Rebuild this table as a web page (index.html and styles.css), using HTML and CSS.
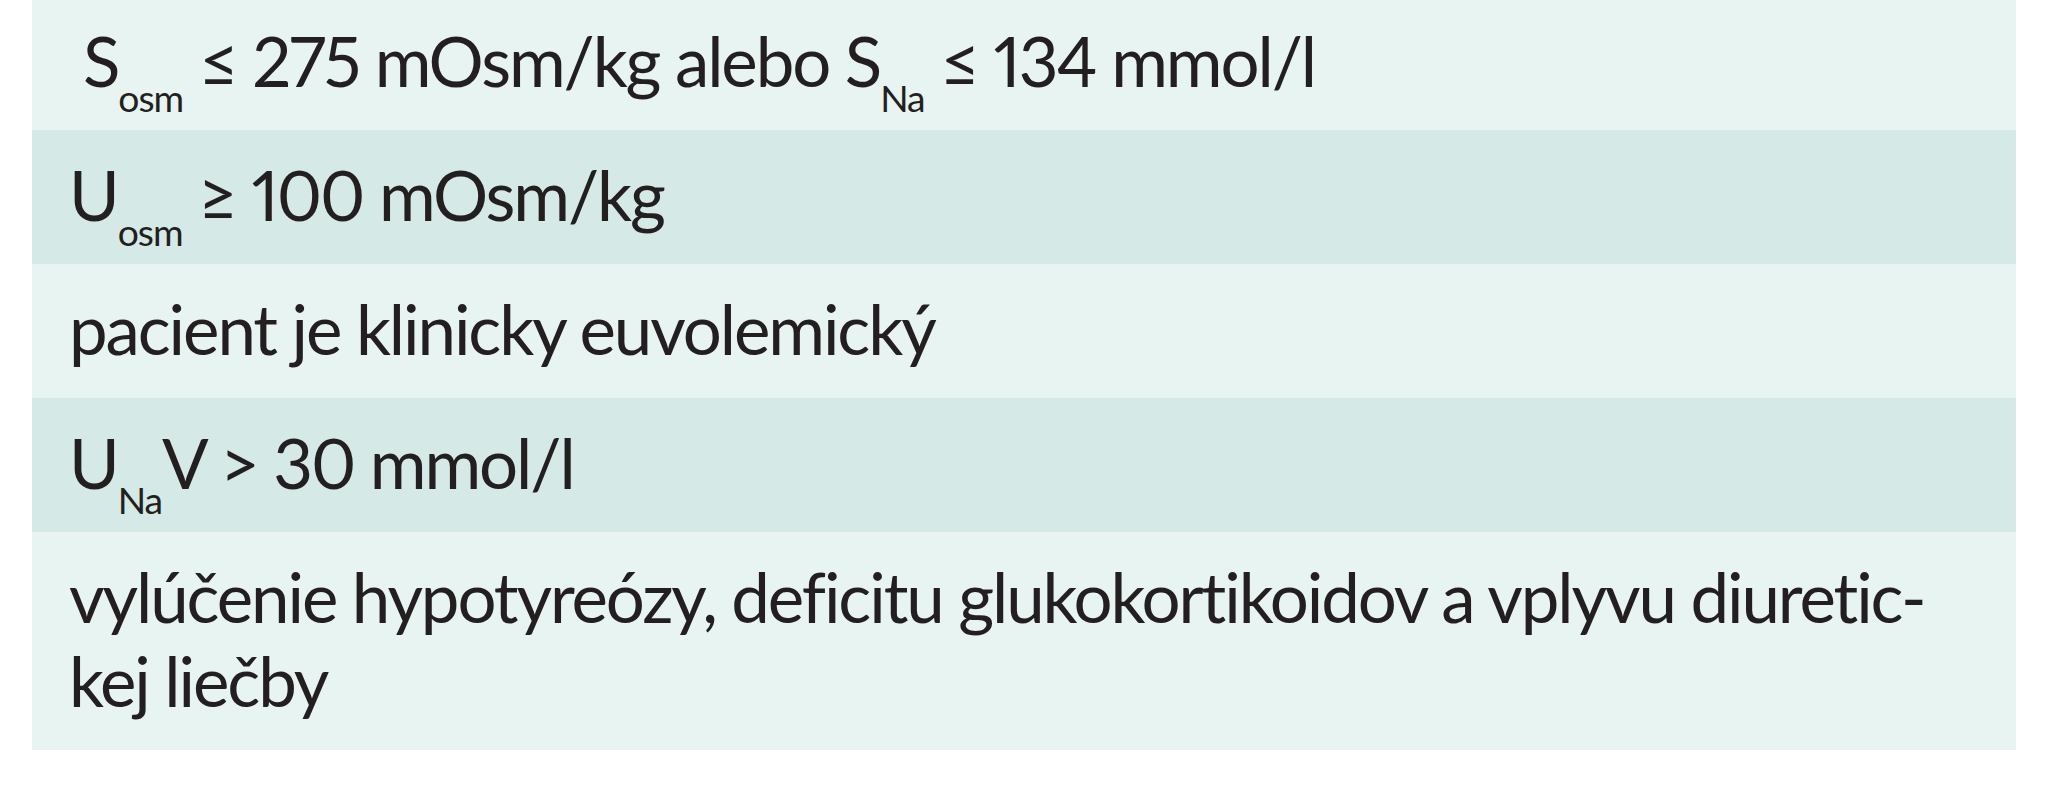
FILE: index.html
```html
<!DOCTYPE html>
<html lang="sk">
<head>
<meta charset="utf-8">
<title>Kritériá SIADH</title>
<link rel="stylesheet" href="styles.css">
</head>
<body>
<div class="criteria">
  <div class="row light first"><span class="lead">S<sub>osm</sub> ≤ 275 mOsm/kg alebo S<sub>Na</sub> ≤ 134 mmol/l</span></div>
  <div class="row dark">U<sub>osm</sub> ≥ 100 mOsm/kg</div>
  <div class="row light">pacient je klinicky euvolemický</div>
  <div class="row dark">U<sub>Na</sub>V &gt; 30 mmol/l</div>
  <div class="row light">vylúčenie hypotyreózy, deficitu glukokortikoidov a vplyvu diuretic-<br>kej liečby</div>
</div>
</body>
</html>
```
FILE: styles.css
```css
html, body {
  margin: 0;
  padding: 0;
  background: #ffffff;
}
body {
  font-family: Lato, "Open Sans", "Liberation Sans", sans-serif;
  color: #231f20;
}
.criteria {
  width: 1984px;
  margin: -4px 0 0 32px;
}
.row {
  font-size: 69px;
  line-height: 84px;
  padding: 23px 20px 27px 37px;
  letter-spacing: -2.1px;
  font-variant-numeric: proportional-nums;
  white-space: nowrap;
}
.light {
  background: #e8f4f2;
}
.dark {
  background: #d5e9e6;
}
.lead {
  padding-left: 14px;
}
sub {
  font-size: 0.54em;
  line-height: 0;
  vertical-align: -0.66em;
  letter-spacing: -1px;
}
```
